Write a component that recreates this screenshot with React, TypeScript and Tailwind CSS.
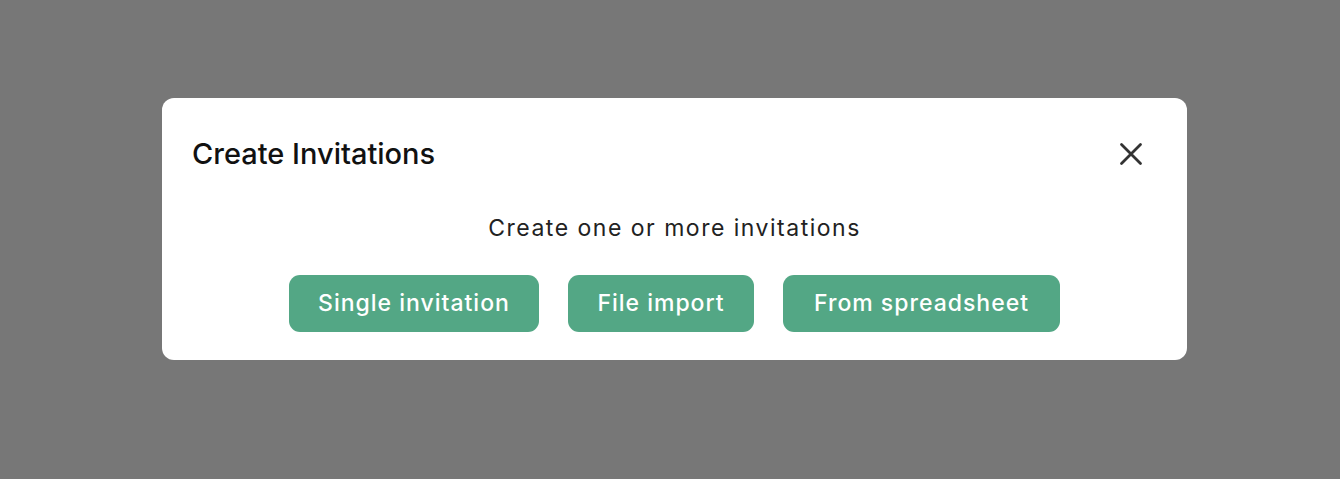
const options = [
  { label: 'Single invitation', width: 'w-[250px]' },
  { label: 'File import', width: 'w-[186px]' },
  { label: 'From spreadsheet', width: 'w-[277px]' },
]

export default function App() {
  return (
    <div
      className="w-[1340px] h-[479px] bg-[#777777] pt-[98px] pl-[162px]"
      style={{ fontFamily: 'Inter, "Noto Sans", sans-serif' }}
    >
      <div className="w-[1025px] h-[262px] rounded-[12px] bg-white px-[30px] pt-[31px]">
        {/* Header */}
        <div className="flex items-center justify-between h-[50px]">
          <h2 className="text-[29px] font-medium text-[#111111] whitespace-nowrap">Create Invitations</h2>
          <button className="w-[36px] h-[36px] mr-[8px] flex items-center justify-center text-[#333333]">
            <svg width="24" height="24" viewBox="0 0 24 24" fill="none" stroke="currentColor" strokeWidth="2.8" strokeLinecap="round">
              <path d="M2.5 2.5l19 19M21.5 2.5l-19 19" />
            </svg>
          </button>
        </div>

        <p className="mt-[35px] text-center text-[23px] leading-[28px] text-[#222222] tracking-[1.5px] whitespace-nowrap">
          Create one or more invitations
        </p>

        <div className="mt-[33px] flex justify-center gap-[29px]">
          {options.map((o) => (
            <button
              key={o.label}
              className={`${o.width} h-[57px] rounded-[11px] bg-[#53a785] text-white text-[23px] font-medium tracking-[1px] whitespace-nowrap`}
            >
              {o.label}
            </button>
          ))}
        </div>
      </div>
    </div>
  )
}
